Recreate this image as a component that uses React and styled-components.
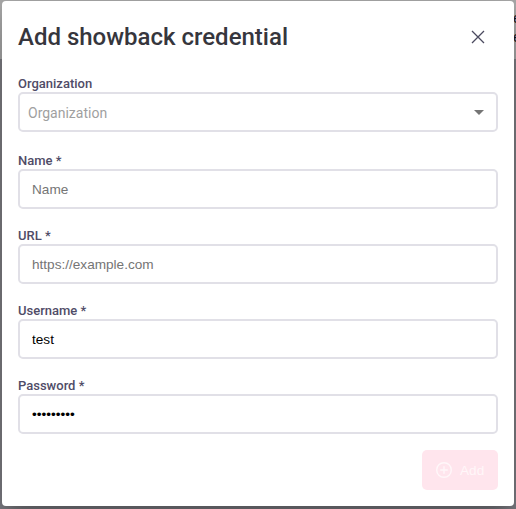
import React from "react";
import styled, { createGlobalStyle } from "styled-components";

const GlobalStyle = createGlobalStyle`
  *, *::before, *::after { box-sizing: border-box; }
  html, body { margin: 0; padding: 0; overflow: hidden; }
  body { font-family: Roboto, sans-serif; }
`;

const Backdrop = styled.div`
  position: relative;
  height: 509px;
  padding: 1px 2px 3px;
  overflow: hidden;
  background: linear-gradient(#acacac 59px, #818087 59px);
`;

const PageText = styled.div`
  position: absolute;
  top: 9px;
  left: 513px;
  color: #15151a;
  font-size: 14px;
  line-height: 19px;
`;

const Dialog = styled.section`
  position: relative;
  width: 512px;
  height: 505px;
  padding: 16px;
  border-radius: 4px;
  background: #fff;
  box-shadow: 0 11px 15px -7px rgba(0, 0, 0, 0.2),
    0 24px 38px 3px rgba(0, 0, 0, 0.14), 0 9px 46px 8px rgba(0, 0, 0, 0.12);
`;

const Header = styled.header`
  display: flex;
  align-items: center;
  justify-content: space-between;
  height: 40px;
  margin-bottom: 19px;
`;

const Title = styled.h1`
  margin: 0;
  color: #36363d;
  font-size: 24px;
  font-weight: 500;
  line-height: 32px;
`;

const CloseButton = styled.button`
  display: flex;
  align-items: center;
  justify-content: center;
  width: 40px;
  height: 40px;
  padding: 0;
  border: 0;
  background: none;
  color: #4b4a5f;
`;

const Field = styled.div`
  display: flex;
  flex-direction: column;
  gap: 1px;
  margin-bottom: ${(p) => p.$gap || 19}px;
`;

const Label = styled.label`
  height: 15px;
  color: #504c67;
  font-size: 13px;
  font-weight: 500;
  line-height: 15px;
`;

const Input = styled.input`
  width: 100%;
  height: 40px;
  padding: 0 12px;
  border: 2px solid #e1e0e7;
  border-radius: 5px;
  outline: none;
  background: #fff;
  color: #000;
  font: 13.6px "Liberation Sans", Arial, sans-serif;
  &::placeholder { color: #757575; opacity: 1; }
`;

const Select = styled.div`
  display: flex;
  align-items: center;
  justify-content: space-between;
  height: 40px;
  padding: 0 12px 0 8px;
  border: 2px solid #e1e0e7;
  border-radius: 5px;
  color: #9f9f9f;
  font-size: 14px;
`;

const Placeholder = styled.span`
  padding-top: 2px;
  line-height: 16px;
`;

const Actions = styled.footer`
  display: flex;
  justify-content: flex-end;
`;

const AddButton = styled.button`
  display: flex;
  align-items: center;
  gap: 8px;
  width: 76px;
  height: 40px;
  padding: 0 0 0 14px;
  border: 0;
  border-radius: 5px;
  background: #ffe5ed;
  color: #fff7f9;
  font: 13.6px "Liberation Sans", Arial, sans-serif;
`;

const fields = [
  { id: "name", label: "Name *", placeholder: "Name" },
  { id: "url", label: "URL *", placeholder: "https://example.com" },
  { id: "username", label: "Username *", defaultValue: "test" },
  { id: "password", label: "Password *", defaultValue: "test12345", type: "password", gap: 16 },
];

export default function App() {
  return (
    <>
      <GlobalStyle />
      <Backdrop>
        <PageText aria-hidden="true">e<br />e</PageText>
        <Dialog role="dialog" aria-labelledby="title">
          <Header>
            <Title id="title">Add showback credential</Title>
            <CloseButton aria-label="Close">
              <svg width="14" height="14" viewBox="0 0 14 14" fill="none" stroke="currentColor" strokeWidth="1.3">
                <path d="M1 1L13 13M13 1L1 13" />
              </svg>
            </CloseButton>
          </Header>
          <Field $gap={21}>
            <Label>Organization</Label>
            <Select role="combobox" aria-label="Organization">
              <Placeholder>Organization</Placeholder>
              <svg width="10" height="5" viewBox="0 0 10 5" fill="#757575">
                <path d="M0 0H10L5 5Z" />
              </svg>
            </Select>
          </Field>
          {fields.map(({ id, label, gap, ...input }) => (
            <Field key={id} $gap={gap}>
              <Label htmlFor={id}>{label}</Label>
              <Input id={id} {...input} />
            </Field>
          ))}
          <Actions>
            <AddButton disabled>
              <svg width="16" height="16" viewBox="0 0 16 16" fill="none" stroke="currentColor" strokeWidth="1.4">
                <circle cx="8" cy="8" r="7.3" />
                <path d="M8 4.2V11.8M4.2 8H11.8" />
              </svg>
              Add
            </AddButton>
          </Actions>
        </Dialog>
      </Backdrop>
    </>
  );
}
